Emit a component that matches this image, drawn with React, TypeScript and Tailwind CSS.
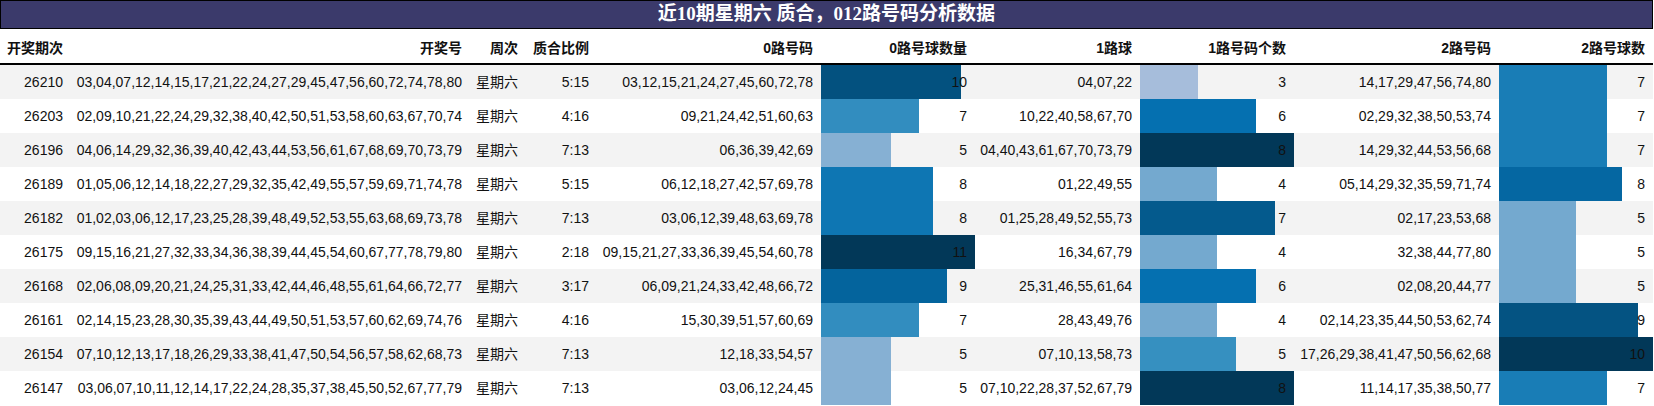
import React from 'react';

const PUBU = ['#fff7fb', '#ece7f2', '#d0d1e6', '#a6bddb', '#74a9cf', '#3690c0', '#0570b0', '#045a8d', '#023858'];

function pubu(t: number) {
  const x = Math.max(0, Math.min(1, t)) * 8;
  const i = Math.min(7, Math.floor(x));
  const f = x - i;
  const a = PUBU[i];
  const b = PUBU[i + 1];
  const ch = (s: string, k: number) => parseInt(s.slice(1 + k * 2, 3 + k * 2), 16);
  const mix = [0, 1, 2].map((k) => Math.round(ch(a, k) + (ch(b, k) - ch(a, k)) * f));
  return `rgb(${mix.join(',')})`;
}

const headers = ['开奖期次', '开奖号', '周次', '质合比例', '0路号码', '0路号球数量', '1路球', '1路号码个数', '2路号码', '2路号球数'];

const widths = [
  'w-[71px]', 'w-[399px]', 'w-[56px]', 'w-[71px]', 'w-[224px]',
  'w-[154px]', 'w-[165px]', 'w-[154px]', 'w-[205px]', 'w-[154px]',
];

type Row = [string, string, string, string, string, number, string, number, string, number];

const rows: Row[] = [
  ['26210', '03,04,07,12,14,15,17,21,22,24,27,29,45,47,56,60,72,74,78,80', '星期六', '5:15', '03,12,15,21,24,27,45,60,72,78', 10, '04,07,22', 3, '14,17,29,47,56,74,80', 7],
  ['26203', '02,09,10,21,22,24,29,32,38,40,42,50,51,53,58,60,63,67,70,74', '星期六', '4:16', '09,21,24,42,51,60,63', 7, '10,22,40,58,67,70', 6, '02,29,32,38,50,53,74', 7],
  ['26196', '04,06,14,29,32,36,39,40,42,43,44,53,56,61,67,68,69,70,73,79', '星期六', '7:13', '06,36,39,42,69', 5, '04,40,43,61,67,70,73,79', 8, '14,29,32,44,53,56,68', 7],
  ['26189', '01,05,06,12,14,18,22,27,29,32,35,42,49,55,57,59,69,71,74,78', '星期六', '5:15', '06,12,18,27,42,57,69,78', 8, '01,22,49,55', 4, '05,14,29,32,35,59,71,74', 8],
  ['26182', '01,02,03,06,12,17,23,25,28,39,48,49,52,53,55,63,68,69,73,78', '星期六', '7:13', '03,06,12,39,48,63,69,78', 8, '01,25,28,49,52,55,73', 7, '02,17,23,53,68', 5],
  ['26175', '09,15,16,21,27,32,33,34,36,38,39,44,45,54,60,67,77,78,79,80', '星期六', '2:18', '09,15,21,27,33,36,39,45,54,60,78', 11, '16,34,67,79', 4, '32,38,44,77,80', 5],
  ['26168', '02,06,08,09,20,21,24,25,31,33,42,44,46,48,55,61,64,66,72,77', '星期六', '3:17', '06,09,21,24,33,42,48,66,72', 9, '25,31,46,55,61,64', 6, '02,08,20,44,77', 5],
  ['26161', '02,14,15,23,28,30,35,39,43,44,49,50,51,53,57,60,62,69,74,76', '星期六', '4:16', '15,30,39,51,57,60,69', 7, '28,43,49,76', 4, '02,14,23,35,44,50,53,62,74', 9],
  ['26154', '07,10,12,13,17,18,26,29,33,38,41,47,50,54,56,57,58,62,68,73', '星期六', '7:13', '12,18,33,54,57', 5, '07,10,13,58,73', 5, '17,26,29,38,41,47,50,56,62,68', 10],
  ['26147', '03,06,07,10,11,12,14,17,22,24,28,35,37,38,45,50,52,67,77,79', '星期六', '7:13', '03,06,12,24,45', 5, '07,10,22,28,37,52,67,79', 8, '11,14,17,35,38,50,77', 7],
];

const barCols = [5, 7, 9];
const maxes: Record<number, number> = {};
barCols.forEach((c) => {
  maxes[c] = Math.max(...rows.map((r) => r[c] as number));
});

function BarCell({ value, max, width }: { value: number; max: number; width: string }) {
  const t = value / max;
  return (
    <div className={`${width} relative h-full flex items-center justify-end pr-2`}>
      <div
        className="absolute left-0 top-0 bottom-0"
        style={{ width: `${t * 154}px`, background: pubu(t) }}
      />
      <span className="relative">{value}</span>
    </div>
  );
}

export default function App() {
  return (
    <div className="w-[1654px] h-[406px] bg-white text-[#111] font-['Liberation_Sans','Noto_Sans_CJK_SC',sans-serif] text-[14px]">
      <div className="w-[1653px] h-[29px] border border-black bg-[#3b3a6b] text-white text-center font-bold text-[19px] leading-[26px] font-['Liberation_Serif','Noto_Sans_CJK_SC',serif]">
        近10期星期六 质合，012路号码分析数据
      </div>

      <div className="w-[1653px] h-[36px] flex border-b-2 border-black font-bold">
        {headers.map((h, i) => (
          <div key={h} className={`${widths[i]} flex items-center justify-end pr-2 pt-[4px]`}>
            {h}
          </div>
        ))}
      </div>

      <div className="w-[1653px]">
        {rows.map((r, ri) => (
          <div key={r[0]} className={`flex h-[34px] ${ri % 2 === 0 ? 'bg-[#f3f3f3]' : 'bg-white'}`}>
            {r.map((cell, ci) =>
              barCols.includes(ci) ? (
                <BarCell key={ci} value={cell as number} max={maxes[ci]} width={widths[ci]} />
              ) : (
                <div key={ci} className={`${widths[ci]} h-full flex items-center justify-end pr-2 whitespace-nowrap`}>
                  {cell}
                </div>
              )
            )}
          </div>
        ))}
      </div>
    </div>
  );
}
